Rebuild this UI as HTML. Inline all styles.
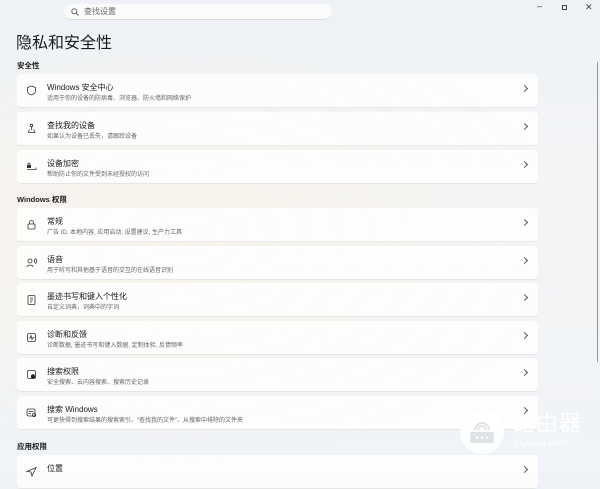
<!DOCTYPE html>
<html><head><meta charset="utf-8"><style>
*{margin:0;padding:0;box-sizing:border-box}
body{width:600px;height:474px;overflow:hidden;position:relative;font-family:"Liberation Sans","Noto Sans CJK SC",sans-serif;color:#1b1b1b;
background:radial-gradient(ellipse 380px 220px at 180px 240px,#f8f3ea 0%,rgba(248,243,234,0) 100%),linear-gradient(180deg,#eef2f7 0%,#f3f4f5 40%,#f0f3f7 100%);}
.search{position:absolute;left:64px;top:4px;width:268px;height:16px;background:#fbfbfc;border-radius:8px;border-bottom:1px solid #d8d8d8;font-size:8px;color:#666;padding-left:20px;line-height:15px}
.search svg{position:absolute;left:7px;top:4px}
h1{position:absolute;left:16px;top:29px;font-size:16px;font-weight:400}
.sec{position:absolute;left:17px;font-size:7.5px;font-weight:600}
.card{position:absolute;left:17px;width:521px;height:34px;background:rgba(253,253,252,.93);border-radius:4px;border-bottom:1px solid #e6e6e6}
.card .t{position:absolute;left:30px;top:8px;font-size:8px;color:#1b1b1b}
.card .s{position:absolute;left:30px;top:19px;font-size:6px;color:#666}
.card .ch{position:absolute;right:11px;top:12px;width:5px;height:5px;border-right:1px solid #555;border-top:1px solid #555;transform:rotate(45deg)}
.card .ic{position:absolute;left:9px;top:11px;width:11px;height:11px}
.win{position:absolute;top:3px;font-size:9px;color:#444}
.wm{position:absolute;left:460px;top:410px;width:44px;height:44px;border-radius:50%;background:rgba(255,255,255,.85)}
.wt{position:absolute;left:513px;top:406px;font-size:22px;color:rgba(255,255,255,.95);letter-spacing:1px}
.wu{position:absolute;left:514px;top:438px;font-size:10px;color:rgba(255,255,255,.95)}
</style></head><body>
<div class="search"><svg width="8" height="8" viewBox="0 0 8 8"><circle cx="3.3" cy="3.3" r="2.5" fill="none" stroke="#555" stroke-width=".9"/><path d="M5.2 5.2L7.5 7.5" stroke="#555" stroke-width=".9"/></svg>查找设置</div>
<div class="win" style="left:537px;top:1px">–</div>
<div style="position:absolute;left:562px;top:5px;width:5px;height:5px;border:1px solid #444"></div>
<div class="win" style="left:585px;top:2px">✕</div>
<div style="position:absolute;left:597px;top:62px;width:1px;height:300px;background:#999"></div>
<h1>隐私和安全性</h1>
<div class="sec" style="top:60px">安全性</div>
<div class="card" style="top:74px"><svg class="ic" viewBox="0 0 11 11"><path d="M5.5 1L9.5 2.5V5.5C9.5 8 7.5 9.5 5.5 10C3.5 9.5 1.5 8 1.5 5.5V2.5Z" fill="none" stroke="#333" stroke-width=".8"/></svg><div class="t">Windows 安全中心</div><div class="s">适用于你的设备的防病毒、浏览器、防火墙和网络保护</div><div class="ch"></div></div>
<div class="card" style="top:112px"><svg class="ic" viewBox="0 0 11 11"><circle cx="5.5" cy="2.5" r="1.3" fill="none" stroke="#333" stroke-width=".8"/><path d="M5.5 4V7M2 9.5H9L7.5 6.5M2 9.5L3.5 6.5" fill="none" stroke="#333" stroke-width=".8"/></svg><div class="t">查找我的设备</div><div class="s">如果认为设备已丢失，请跟踪设备</div><div class="ch"></div></div>
<div class="card" style="top:150px"><svg class="ic" viewBox="0 0 11 11"><rect x="1" y="4" width="4" height="3" fill="#333"/><path d="M2 4V3a1 1 0 012 0V4M1 8.5H10V6.5" fill="none" stroke="#333" stroke-width=".8"/></svg><div class="t">设备加密</div><div class="s">帮助防止你的文件受到未经授权的访问</div><div class="ch"></div></div>
<div class="sec" style="top:194px">Windows 权限</div>
<div class="card" style="top:208px"><svg class="ic" viewBox="0 0 11 11"><rect x="2" y="5" width="7" height="5" rx="1" fill="none" stroke="#333" stroke-width=".8"/><path d="M3.5 5V3.5a2 2 0 014 0V5" fill="none" stroke="#333" stroke-width=".8"/></svg><div class="t">常规</div><div class="s">广告 ID, 本地内容, 应用启动, 设置建议, 生产力工具</div><div class="ch"></div></div>
<div class="card" style="top:246px"><svg class="ic" viewBox="0 0 11 11"><circle cx="4" cy="4" r="2" fill="none" stroke="#333" stroke-width=".8"/><path d="M1 10C1 7.5 7 7.5 7 10M8 2Q9.5 4 8 6M9.5 1Q11.5 4 9.5 7" fill="none" stroke="#333" stroke-width=".8"/></svg><div class="t">语音</div><div class="s">用于听写和其他基于语音的交互的在线语音识别</div><div class="ch"></div></div>
<div class="card" style="top:283px"><svg class="ic" viewBox="0 0 11 11"><rect x="2" y="1.5" width="7" height="9" rx="1" fill="none" stroke="#333" stroke-width=".8"/><path d="M4 4H7M4 6H7M4 8H6" stroke="#333" stroke-width=".8"/></svg><div class="t">墨迹书写和键入个性化</div><div class="s">自定义词典，词典中的字词</div><div class="ch"></div></div>
<div class="card" style="top:321px"><svg class="ic" viewBox="0 0 11 11"><rect x="1.5" y="1.5" width="8" height="8" rx="1.5" fill="none" stroke="#333" stroke-width=".8"/><path d="M2.5 6H4L5 3.5L6 7.5L7 5.5H8.5" fill="none" stroke="#333" stroke-width=".8"/></svg><div class="t">诊断和反馈</div><div class="s">诊断数据, 墨迹书写和键入数据, 定制体验, 反馈频率</div><div class="ch"></div></div>
<div class="card" style="top:358px"><svg class="ic" viewBox="0 0 11 11"><rect x="1.5" y="1.5" width="8" height="8" rx="1.5" fill="none" stroke="#333" stroke-width=".8"/><circle cx="7" cy="7.5" r="2.2" fill="#222"/></svg><div class="t">搜索权限</div><div class="s">安全搜索、云内容搜索、搜索历史记录</div><div class="ch"></div></div>
<div class="card" style="top:396px"><svg class="ic" viewBox="0 0 11 11"><rect x="1" y="2" width="8" height="7" rx="1.5" fill="none" stroke="#333" stroke-width=".8"/><path d="M2.5 4.5H7.5M2.5 6.5H5" stroke="#333" stroke-width=".8"/><circle cx="8" cy="8" r="1.6" fill="none" stroke="#333" stroke-width=".8"/></svg><div class="t">搜索 Windows</div><div class="s">可更快得到搜索结果的搜索索引、“查找我的文件”、从搜索中排除的文件夹</div><div class="ch"></div></div>
<div class="sec" style="top:441px">应用权限</div>
<div class="card" style="top:455px"><svg class="ic" viewBox="0 0 11 11"><path d="M1 5.5L10 1.5L6 10L5 6Z" fill="none" stroke="#333" stroke-width=".8"/></svg><div class="t">位置</div><div class="ch"></div></div>
<div class="wm"><svg width="44" height="44" viewBox="0 0 44 44"><rect x="10" y="22" width="24" height="11" rx="2" fill="#dfe2e6"/><circle cx="17" cy="27.5" r="1.3" fill="#fff"/><circle cx="22" cy="27.5" r="1.3" fill="#fff"/><circle cx="27" cy="27.5" r="1.3" fill="#fff"/><path d="M15 20a7 7 0 0114 0M18 20a4 4 0 018 0" fill="none" stroke="#dfe2e6" stroke-width="2"/></svg></div>
<div class="wt">路由器</div><div class="wu">luyouqi.com</div>
</body></html>
